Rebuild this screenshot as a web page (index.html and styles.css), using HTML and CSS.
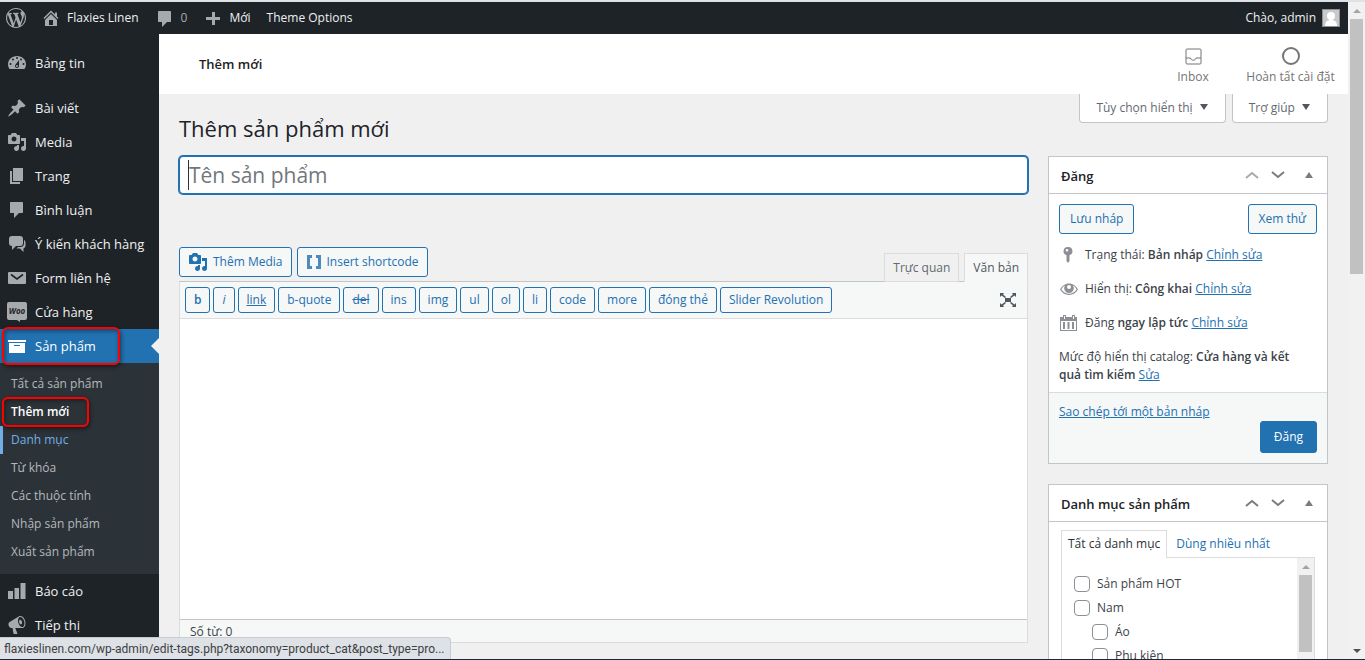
FILE: index.html
```html
<!DOCTYPE html>
<html lang="vi">
<head>
    <meta charset="UTF-8">
    <meta name="viewport" content="width=device-width, initial-scale=1.0">
    <title>Thêm sản phẩm mới</title>
    <link rel="stylesheet" href="styles.css">
</head>
<body>
    <div class="page">
        <header class="adminbar">
            <a href="#" class="bar-item bar-logo" aria-label="WordPress">
                <svg class="icon" viewBox="0 0 20 20"><path d="M20 10c0-5.51-4.49-10-10-10C4.48 0 0 4.49 0 10c0 5.52 4.48 10 10 10 5.51 0 10-4.48 10-10zM7.78 15.37L4.37 6.22c.55-.02 1.17-.08 1.17-.08.5-.06.44-1.13-.06-1.11 0 0-1.45.11-2.37.11-.18 0-.37 0-.58-.01C4.12 2.69 6.87 1.11 10 1.11c2.33 0 4.45.87 6.05 2.34-.68-.11-1.65.39-1.65 1.58 0 .74.45 1.36.9 2.1.35.61.55 1.36.55 2.46 0 1.49-1.4 5-1.4 5l-3.03-8.37c.54-.02.82-.17.82-.17.5-.05.44-1.25-.06-1.22 0 0-1.44.12-2.38.12-.87 0-2.33-.12-2.33-.12-.5-.03-.56 1.2-.06 1.22l.92.08 1.26 3.41zM17.41 10c.24-.64.74-1.87.43-4.25.7 1.29 1.05 2.71 1.05 4.25 0 3.29-1.73 6.24-4.4 7.78.97-2.59 1.94-5.2 2.92-7.78zM6.1 18.09C3.12 16.65 1.11 13.53 1.11 10c0-1.3.23-2.48.72-3.59C3.25 10.3 4.67 14.2 6.1 18.09zm4.03-6.63l2.58 6.98c-.86.29-1.76.45-2.71.45-.79 0-1.57-.11-2.29-.33.81-2.38 1.62-4.74 2.42-7.1z"/></svg>
            </a>
            <a href="#" class="bar-item">
                <svg class="icon" viewBox="0 0 20 20"><path d="M16 8.5l1.53 1.53-1.06 1.06L10 4.6l-6.47 6.49-1.06-1.06L10 2.5l4 4v-2h2v4zm-6-2.46l6 5.99V18H4v-5.97zM12 17v-5H8v5h4z"/></svg>
                Flaxies Linen
            </a>
            <a href="#" class="bar-item bar-count">
                <svg class="icon" viewBox="0 0 20 20"><path d="M4 3h11c.6 0 1 .4 1 1v9c0 .6-.4 1-1 1h-3l-5 5v-5H4c-.6 0-1-.4-1-1V4c0-.6.4-1 1-1z"/></svg>
                0
            </a>
            <a href="#" class="bar-item">
                <svg class="icon" viewBox="0 0 20 20"><path d="M17 9v3h-5v5H9v-5H3V9h6V4h3v5h5z"/></svg>
                Mới
            </a>
            <a href="#" class="bar-item">Theme Options</a>
            <a href="#" class="bar-item bar-user">
                Chào, admin
                <svg class="avatar" viewBox="0 0 18 18"><rect width="18" height="18" fill="#8c8f94"/><rect x="1" y="1" width="16" height="16" fill="#c9c9c9"/><circle cx="9" cy="7" r="4" fill="#fff"/><path d="M3 17c0-4 2-6 6-6s6 2 6 6z" fill="#fff"/></svg>
            </a>
        </header>

        <div class="layout">
            <nav class="menu">
                <a href="#" class="menu-item">
                    <svg class="icon" viewBox="0 0 20 20"><path fill-rule="evenodd" d="M2.500 16h15c1-1.400 1.500-2.900 1.500-4.500C19 6.500 15 3 10 3s-9 3.500-9 8.500c0 1.600.5 3.100 1.500 4.500zM10 4a1 1 0 110 2 1 1 0 010-2zM6 5.500a1 1 0 110 2 1 1 0 010-2zm8 0a1 1 0 110 2 1 1 0 010-2zm-5.370 6.050L12 7v6c0 1.100-.9 2-2 2s-2-.9-2-2c0-.57.24-1.080.63-1.450zM3.500 10a1 1 0 110 2 1 1 0 010-2zm13 0a1 1 0 110 2 1 1 0 010-2zM11 13a1 1 0 10-2 0 1 1 0 002 0z"/></svg>
                    Bảng tin
                </a>
                <a href="#" class="menu-item menu-gap">
                    <svg class="icon" viewBox="0 0 20 20"><path d="M10.44 3.02l1.82-1.82 6.36 6.35-1.83 1.82c-1.05-.68-2.48-.57-3.41.36l-.75.75c-.92.93-1.04 2.35-.35 3.41l-1.83 1.82-2.41-2.41-2.8 2.79c-.42.42-3.38 2.71-3.8 2.29s1.86-3.39 2.28-3.81l2.79-2.79L4.1 9.36l1.83-1.82c1.05.69 2.48.57 3.4-.36l.75-.75c.93-.92 1.05-2.35.36-3.41z"/></svg>
                    Bài viết
                </a>
                <a href="#" class="menu-item">
                    <svg class="icon" viewBox="0 0 20 20"><path d="M13 11V4c0-.55-.45-1-1-1h-1.67L9 1H5L3.67 3H2c-.55 0-1 .45-1 1v7c0 .55.45 1 1 1h10c.55 0 1-.45 1-1zM7 4.5c1.38 0 2.5 1.12 2.5 2.5S8.38 9.5 7 9.5 4.5 8.38 4.5 7 5.62 4.5 7 4.5zM14 6h5v10.5c0 1.38-1.12 2.5-2.5 2.5S14 17.88 14 16.5s1.12-2.5 2.5-2.5c.17 0 .34.02.5.05V9h-3V6zm-4 8.05V13h2v3.5c0 1.38-1.12 2.5-2.5 2.5S7 17.88 7 16.5 8.12 14 9.5 14c.17 0 .34.02.5.05z"/></svg>
                    Media
                </a>
                <a href="#" class="menu-item">
                    <svg class="icon" viewBox="0 0 20 20"><path d="M6 15V2h10v13H6zm-1 1h8v2H3V5h2v11z"/></svg>
                    Trang
                </a>
                <a href="#" class="menu-item">
                    <svg class="icon" viewBox="0 0 20 20"><path d="M4 2h11c.6 0 1 .4 1 1v9c0 .6-.4 1-1 1h-3l-5 5v-5H4c-.6 0-1-.4-1-1V3c0-.6.4-1 1-1z"/></svg>
                    Bình luận
                </a>
                <a href="#" class="menu-item">
                    <svg class="icon" viewBox="0 0 20 20"><path d="M5 2h8c2 0 3 1.200 3 3v4c0 1.800-1 3-3 3H9l-4 4v-4c-2 0-3-1.200-3-3V5c0-1.800 1-3 3-3z"/><path d="M17 6c1 .5 1.500 1.500 1.500 2.500v3c0 1.500-.8 2.500-2 2.700V18L13 14.500H9.500L11 13h2.500c2 0 3.500-1.300 3.500-3.500z"/></svg>
                    Ý kiến khách hàng
                </a>
                <a href="#" class="menu-item">
                    <svg class="icon" viewBox="0 0 20 20"><rect x="1" y="4" width="18" height="12" rx="1"/><path d="M4 6.500l6 4.500 6-4.500" fill="none" stroke="#1d2327" stroke-width="1.600"/></svg>
                    Form liên hệ
                </a>
                <a href="#" class="menu-item">
                    <svg class="icon" viewBox="0 0 20 20"><path d="M2 0h16a2 2 0 012 2v14a2 2 0 01-2 2h-5v2l-3-2H2a2 2 0 01-2-2V2a2 2 0 012-2z"/><text class="woo" x="10" y="12" text-anchor="middle">Woo</text></svg>
                    Cửa hàng
                </a>
                <a href="#" class="menu-item current marked">
                    <svg class="icon" viewBox="0 0 20 20"><path d="M19 4v2H1V4h18zM2 7h16v10H2V7zm11 3V9H7v1h6z"/></svg>
                    Sản phẩm
                </a>
                <div class="submenu">
                    <a href="#">Tất cả sản phẩm</a>
                    <a href="#" class="active marked">Thêm mới</a>
                    <a href="#" class="hovered">Danh mục</a>
                    <a href="#">Từ khóa</a>
                    <a href="#">Các thuộc tính</a>
                    <a href="#">Nhập sản phẩm</a>
                    <a href="#">Xuất sản phẩm</a>
                </div>
                <a href="#" class="menu-item">
                    <svg class="icon" viewBox="0 0 20 20"><path d="M18.500 18V2h-5v16h5zm-6.500 0V7H7.500v11H12zm-6 0v-8H1v8h5z"/></svg>
                    Báo cáo
                </a>
                <a href="#" class="menu-item">
                    <svg class="icon" viewBox="0 0 20 20"><path fill-rule="evenodd" d="M18.15 5.94c.46 1.62.38 3.22-.02 4.48-.42 1.28-1.26 2.18-2.3 2.48-.16.06-.26.06-.4.06-.06.02-.12.02-.18.02-.06.02-.14.02-.22.02h-6.8l2.22 5.5c.02.14-.06.26-.14.34-.08.1-.24.16-.34.16H6.95c-.1 0-.26-.06-.34-.16-.08-.08-.16-.2-.14-.34l-1-5.5H4.25l-.02-.02c-.5.06-1.08-.18-1.54-.62s-.88-1.08-1.06-1.88c-.24-.8-.2-1.56-.02-2.2.18-.62.58-1.08 1.06-1.3l.02-.02 9-5.4c.1-.06.18-.1.24-.16.06-.04.14-.08.24-.12.16-.08.28-.12.5-.18 1.04-.3 2.24.1 3.22.98s1.84 2.24 2.26 3.86zm-2.58 5.98h-.02c.4-.1.74-.34 1.04-.7.58-.7.86-1.76.86-3.04 0-.64-.1-1.3-.28-1.98-.34-1.36-1.02-2.5-1.78-3.24s-1.68-1.1-2.46-.88c-.82.22-1.4.96-1.7 2-.32 1.04-.28 2.36.06 3.72.38 1.36 1 2.5 1.8 3.24.78.74 1.62 1.1 2.48.88zm-2.54-7.08c.22-.04.42-.02.62.04.38.16.76.48 1.02 1s.42 1.2.42 1.78c0 .3-.04.56-.12.8-.18.48-.44.84-.86.94-.34.1-.8-.06-1.14-.4s-.64-.86-.78-1.5c-.18-.62-.12-1.24.02-1.72s.48-.84.82-.94z"/></svg>
                    Tiếp thị
                </a>
            </nav>

            <main class="content">
                <div class="woo-header">
                    <h1 class="woo-title">Thêm mới</h1>
                    <button type="button" class="woo-tab">
                        <svg class="tab-icon tab-icon-thin" viewBox="0 0 20 20"><rect x="3" y="3" width="15" height="15" rx="1"/><path d="M3 12h4.500c.5 3 5 3 5.500 0H18"/></svg>
                        Inbox
                    </button>
                    <button type="button" class="woo-tab">
                        <svg class="tab-icon" viewBox="0 0 20 20"><circle cx="10" cy="10" r="8"/></svg>
                        Hoàn tất cài đặt
                    </button>
                </div>

                <div class="wrap">
                    <div class="screen-links">
                        <button type="button">Tùy chọn hiển thị <span class="tri-down"></span></button>
                        <button type="button">Trợ giúp <span class="tri-down"></span></button>
                    </div>
                    <h2 class="page-title">Thêm sản phẩm mới</h2>

                    <div class="columns">
                        <section class="editor">
                            <input type="text" class="title-input" id="title" aria-label="Tên sản phẩm" placeholder="Tên sản phẩm">

                            <div class="editor-tools">
                                <button type="button" class="button">
                                    <svg class="icon" viewBox="0 0 20 20"><path d="M13 11V4c0-.55-.45-1-1-1h-1.67L9 1H5L3.67 3H2c-.55 0-1 .45-1 1v7c0 .55.45 1 1 1h10c.55 0 1-.45 1-1zM7 4.5c1.38 0 2.5 1.12 2.5 2.5S8.38 9.5 7 9.5 4.5 8.38 4.5 7 5.62 4.5 7 4.5zM14 6h5v10.5c0 1.38-1.12 2.5-2.5 2.5S14 17.88 14 16.5s1.12-2.5 2.5-2.5c.17 0 .34.02.5.05V9h-3V6zm-4 8.05V13h2v3.5c0 1.38-1.12 2.5-2.5 2.5S7 17.88 7 16.5 8.12 14 9.5 14c.17 0 .34.02.5.05z"/></svg>
                                    Thêm Media
                                </button>
                                <button type="button" class="button">
                                    <svg class="icon icon-brackets" viewBox="0 0 16 16"><path d="M1 1h5v3H4v8h2v3H1zM15 1h-5v3h2v8h-2v3h5z"/></svg>
                                    Insert shortcode
                                </button>
                                <div class="editor-tabs">
                                    <button type="button">Trực quan</button>
                                    <button type="button" class="selected">Văn bản</button>
                                </div>
                            </div>

                            <div class="editor-box">
                                <div class="quicktags">
                                    <button type="button" class="button"><b>b</b></button>
                                    <button type="button" class="button"><i>i</i></button>
                                    <button type="button" class="button"><u>link</u></button>
                                    <button type="button" class="button">b-quote</button>
                                    <button type="button" class="button"><del>del</del></button>
                                    <button type="button" class="button">ins</button>
                                    <button type="button" class="button">img</button>
                                    <button type="button" class="button">ul</button>
                                    <button type="button" class="button">ol</button>
                                    <button type="button" class="button">li</button>
                                    <button type="button" class="button">code</button>
                                    <button type="button" class="button">more</button>
                                    <button type="button" class="button">đóng thẻ</button>
                                    <button type="button" class="button">Slider Revolution</button>
                                    <button type="button" class="expand" aria-label="Toàn màn hình">
                                        <svg class="icon" viewBox="0 0 20 20"><path d="M7 8h6v4H7zM2 3h4L5 4.500 8 7 7 8 3.500 5.500 2 7zM18 3h-4l1 1.500L12 7l1 1 3.500-2.500L18 7zM2 17h4l-1-1.500L8 13l-1-1-3.500 2.500L2 13zM18 17h-4l1-1.500-3-2.500 1-1 3.500 2.500L18 13z"/></svg>
                                    </button>
                                </div>
                                <textarea class="editor-text" aria-label="Nội dung"></textarea>
                                <div class="word-count">Số từ: 0</div>
                            </div>
                        </section>

                        <aside class="side">
                            <section class="postbox">
                                <div class="postbox-header">
                                    <h2>Đăng</h2>
                                    <button type="button" class="disabled" aria-label="Lên"><svg viewBox="0 0 14 8"><path d="M1 7l6-5 6 5"/></svg></button>
                                    <button type="button" aria-label="Xuống"><svg viewBox="0 0 14 8"><path d="M1 1l6 5 6-5"/></svg></button>
                                    <button type="button" aria-label="Thu gọn"><span class="tri-up"></span></button>
                                </div>
                                <div class="publish">
                                    <div class="publish-actions">
                                        <button type="button" class="button">Lưu nháp</button>
                                        <button type="button" class="button">Xem thử</button>
                                    </div>
                                    <p class="publish-row">
                                        <svg class="icon" viewBox="0 0 20 20"><path fill-rule="evenodd" d="M9 2a4.200 4.200 0 011.500 8.200V16L9 18l-1.500-2v-5.800A4.200 4.200 0 019 2zM8 4a1.300 1.300 0 100 2.600A1.300 1.300 0 008 4z"/></svg>
                                        <span>Trạng thái: <b>Bản nháp</b> <a href="#">Chỉnh sửa</a></span>
                                    </p>
                                    <p class="publish-row">
                                        <svg class="icon" viewBox="0 0 20 20"><path fill-rule="evenodd" d="M10 4.500c4 0 7 2.500 9 6-2 3-5 5.500-9 5.500s-7-2.500-9-5.500c2-3.500 5-6 9-6zM6 6.500c-1.500.8-2.700 2.200-3.600 4C4 13 7 14.700 10 14.700s6-1.700 7.600-4.200c-.9-1.800-2.100-3.200-3.600-4A4.800 4.800 0 0110 14a4.800 4.800 0 01-4-7.500zM10 6a2 2 0 100 4 2 2 0 000-4z"/></svg>
                                        <span>Hiển thị: <b>Công khai</b> <a href="#">Chỉnh sửa</a></span>
                                    </p>
                                    <p class="publish-row">
                                        <svg class="icon" viewBox="0 0 20 20"><path fill-rule="evenodd" d="M1 4h3V2h3v2h6V2h3v2h2v14H1zM2 8v9h15V8zM5 3v3h1V3zM14 3v3h1V3zM4 9h2v7H4zM8.500 9h2v7h-2zM13 9h2v7h-2z"/></svg>
                                        <span>Đăng <b>ngay lập tức</b> <a href="#">Chỉnh sửa</a></span>
                                    </p>
                                    <p class="catalog">Mức độ hiển thị catalog: <b>Cửa hàng và kết quả tìm kiếm</b> <a href="#">Sửa</a></p>
                                </div>
                                <div class="publish-footer">
                                    <a href="#">Sao chép tới một bản nháp</a>
                                    <button type="submit" class="button primary">Đăng</button>
                                </div>
                            </section>

                            <section class="postbox">
                                <div class="postbox-header">
                                    <h2>Danh mục sản phẩm</h2>
                                    <button type="button" aria-label="Lên"><svg viewBox="0 0 14 8"><path d="M1 7l6-5 6 5"/></svg></button>
                                    <button type="button" aria-label="Xuống"><svg viewBox="0 0 14 8"><path d="M1 1l6 5 6-5"/></svg></button>
                                    <button type="button" aria-label="Thu gọn"><span class="tri-up"></span></button>
                                </div>
                                <div class="categories">
                                    <div class="cat-tabs">
                                        <a href="#" class="selected">Tất cả danh mục</a>
                                        <a href="#">Dùng nhiều nhất</a>
                                    </div>
                                    <div class="cat-panel">
                                        <div class="cat-list">
                                            <label><input type="checkbox"> Sản phẩm HOT</label>
                                            <label><input type="checkbox"> Nam</label>
                                            <label class="child"><input type="checkbox"> Áo</label>
                                            <label class="child"><input type="checkbox"> Phụ kiện</label>
                                        </div>
                                        <div class="scrollbar">
                                            <span class="arrow-up"></span>
                                            <span class="thumb thumb-small"></span>
                                        </div>
                                    </div>
                                </div>
                            </section>
                        </aside>
                    </div>
                </div>
            </main>
        </div>
    </div>

    <div class="scrollbar">
        <span class="arrow-up"></span>
        <span class="thumb"></span>
        <span class="arrow-down"></span>
    </div>

    <div class="status-url">flaxieslinen.com/wp-admin/edit-tags.php?taxonomy=product_cat&amp;post_type=pro...</div>
</body>
</html>
```
FILE: styles.css
```css
*,
*::before,
*::after {
    box-sizing: border-box;
}
body {
    margin: 0;
    height: 100vh;
    overflow: hidden;
    display: flex;
    position: relative;
    border-top: 2px solid #dee1e6;
    border-bottom: 1px solid #1b2a3a;
    background: #f0f0f1;
    color: #3c434a;
    font-family: "Open Sans", "Noto Sans", sans-serif;
    font-size: 12px;
    line-height: 18px;
}
a {
    color: #2271b1;
}
button {
    font-family: inherit;
    font-size: 12px;
    line-height: 18px;
    cursor: pointer;
}
b {
    font-weight: 600;
}
.icon {
    width: 20px;
    height: 20px;
    flex: none;
    fill: currentColor;
}
.page {
    flex: 1;
    min-width: 0;
    display: flex;
    flex-direction: column;
}

/* Admin bar */
.adminbar {
    flex: none;
    height: 32px;
    display: flex;
    background: #1d2327;
}
.bar-item {
    display: flex;
    align-items: center;
    gap: 6px;
    padding: 0 8px;
    color: #f0f0f1;
    text-decoration: none;
}
.bar-item .icon {
    color: #a7aaad;
}
.bar-logo {
    padding: 0 7px 0 6px;
}
.bar-count {
    color: #a7aaad;
}
.bar-user {
    margin-left: auto;
}
.avatar {
    width: 18px;
    height: 18px;
}

/* Left menu */
.layout {
    flex: 1;
    min-height: 0;
    display: flex;
}
.menu {
    flex: none;
    width: 159px;
    padding-top: 12px;
    overflow: hidden;
    background: #1d2327;
}
.menu-item {
    position: relative;
    height: 34px;
    display: flex;
    align-items: center;
    gap: 8px;
    padding-left: 7px;
    color: #f0f0f1;
    font-size: 13px;
    text-decoration: none;
    white-space: nowrap;
}
.menu-item .icon {
    color: #a7aaad;
}
.menu-gap {
    margin-top: 11px;
}
.woo {
    fill: #1d2327;
    font: bold italic 8px "Open Sans", sans-serif;
}
.current,
.menu .current .icon {
    color: #fff;
}
.current {
    background: #2271b1;
}
.current::before {
    content: "";
    position: absolute;
    right: 0;
    top: 9px;
    border: 8px solid transparent;
    border-left: 0;
    border-right-color: #f0f0f1;
}
.marked::after {
    content: "";
    position: absolute;
    left: 2px;
    top: -2px;
    bottom: -2px;
    width: 118px;
    border: 2px solid #f00;
    border-radius: 6px;
    box-shadow: 1px 2px 4px rgba(0, 0, 0, 0.5), inset 1px 2px 4px rgba(0, 0, 0, 0.4);
    z-index: 1;
}
.submenu {
    padding: 7px 0 8px;
    background: #2c3338;
}
.submenu a {
    position: relative;
    display: block;
    padding: 5px 11px;
    color: #b4b9be;
    text-decoration: none;
}
.submenu .active {
    color: #fff;
    font-weight: 600;
}
.submenu .marked::after {
    top: -1px;
    bottom: -1px;
    width: 87px;
}
.submenu .hovered {
    padding-left: 8px;
    border-left: 3px solid #72aee6;
    color: #72aee6;
}

/* Header */
.content {
    flex: 1;
    min-width: 0;
    overflow: hidden;
}
.woo-header {
    height: 60px;
    display: flex;
    align-items: center;
    padding-left: 40px;
    background: #fff;
}
.woo-title {
    margin: 0 auto 0 0;
    color: #1e1e1e;
    font-size: 13px;
    font-weight: 600;
}
.woo-tab {
    min-width: 80px;
    height: 60px;
    display: flex;
    flex-direction: column;
    align-items: center;
    justify-content: center;
    gap: 2px;
    padding: 4px 12px 0;
    border: 0;
    background: none;
    color: #757575;
}
.woo-tab:last-child {
    min-width: 115px;
}
.tab-icon {
    width: 20px;
    height: 20px;
    fill: none;
    stroke: #757575;
    stroke-width: 2;
}
.tab-icon-thin {
    stroke-width: 1;
}
.wrap {
    padding: 0 20px;
}
.screen-links {
    height: 19px;
    display: flex;
    align-items: flex-start;
    justify-content: flex-end;
    gap: 6px;
}
.screen-links button {
    height: 29px;
    padding: 0 17px 0 16px;
    border: 1px solid #c3c4c7;
    border-top: 0;
    border-radius: 0 0 4px 4px;
    background: #fff;
    color: #646970;
}
.tri-down,
.tri-up {
    display: inline-block;
    border: 4px solid transparent;
}
.tri-down {
    margin-left: 4px;
    border-top: 6px solid #50575e;
    border-bottom: 0;
    vertical-align: 2px;
}
.tri-up {
    border-bottom: 6px solid #787c82;
    border-top: 0;
}
.page-title {
    margin: 0;
    padding-bottom: 13px;
    color: #1d2327;
    font-size: 22px;
    font-weight: 400;
    line-height: 30px;
}

/* Editor */
.columns {
    display: flex;
    align-items: flex-start;
    gap: 20px;
}
.editor {
    flex: 1;
    min-width: 0;
}
.title-input {
    display: block;
    width: 100%;
    height: 38px;
    padding: 0 9px;
    border: 1px solid #2271b1;
    border-radius: 4px;
    outline: 0;
    box-shadow: 0 0 0 1px #2271b1;
    background: linear-gradient(#2c3338, #2c3338) 8px center / 1px 30px no-repeat #fff;
    color: #2c3338;
    font-family: inherit;
    font-size: 21px;
}
.title-input::placeholder {
    color: #72777c;
}
.button {
    height: 30px;
    display: flex;
    align-items: center;
    gap: 5px;
    padding: 0 10px;
    border: 1px solid #2271b1;
    border-radius: 3px;
    background: #f6f7f7;
    color: #2271b1;
    white-space: nowrap;
}
.editor-tools {
    display: flex;
    gap: 5px;
    margin-top: 53px;
}
.editor-tools .button {
    padding: 0 8px;
}
.icon-brackets {
    width: 16px;
    height: 16px;
    opacity: 0.8;
}
.editor-tabs {
    display: flex;
    align-items: flex-end;
    gap: 5px;
    height: 35px;
    margin-left: auto;
    margin-bottom: -1px;
    z-index: 1;
}
.editor-tabs button {
    height: 29px;
    padding: 0 8px;
    border: 1px solid #dcdcde;
    background: #f0f0f1;
    color: #646970;
}
.editor-tabs .selected {
    border-bottom-color: #f6f7f7;
    background: #f6f7f7;
    color: #50575e;
}
.editor-box {
    border: 1px solid #dcdcde;
    border-top-color: #c3c4c7;
    background: #f6f7f7;
}
.quicktags {
    display: flex;
    align-items: center;
    gap: 3px;
    padding: 5px;
    border-bottom: 1px solid #dcdcde;
}
.quicktags .button {
    height: 26px;
    padding: 0 8px;
}
.expand {
    display: flex;
    margin-left: auto;
    margin-right: 4px;
    padding: 0;
    border: 0;
    background: none;
    color: #50575e;
}
.editor-text {
    display: block;
    width: 100%;
    height: 300px;
    padding: 10px;
    border: 0;
    outline: 0;
    resize: none;
    background: #fff;
}
.word-count {
    padding: 3px 10px 1px;
    border-top: 1px solid #c3c4c7;
}

/* Side boxes */
.side {
    flex: none;
    width: 280px;
}
.postbox {
    margin-bottom: 20px;
    border: 1px solid #c3c4c7;
    background: #fff;
}
.postbox-header {
    height: 37px;
    display: flex;
    align-items: center;
    padding: 0 5px 0 12px;
    border-bottom: 1px solid #c3c4c7;
}
.postbox-header h2 {
    margin: 0 auto 0 0;
    padding-top: 2px;
    color: #1d2327;
    font-size: 13px;
    font-weight: 600;
}
.postbox-header button {
    width: 26px;
    height: 36px;
    display: flex;
    align-items: center;
    justify-content: center;
    padding: 0;
    border: 0;
    background: none;
}
.postbox-header button:last-child {
    margin-left: 5px;
}
.postbox-header svg {
    width: 14px;
    height: 8px;
    fill: none;
    stroke: #787c82;
    stroke-width: 2;
}
.postbox-header .disabled svg {
    stroke: #a7aaad;
}
.publish {
    padding: 10px 10px 8px;
}
.publish-actions {
    display: flex;
    justify-content: space-between;
    margin-bottom: 4px;
}
.publish-row {
    height: 34px;
    display: flex;
    align-items: center;
    gap: 6px;
    margin: 0;
    white-space: nowrap;
}
.publish-row .icon {
    color: #8c8f94;
}
.catalog {
    margin: 8px 0 0;
    padding-right: 16px;
}
.publish-footer {
    display: flex;
    flex-direction: column;
    align-items: flex-start;
    padding: 10px;
    border-top: 1px solid #dcdcde;
    background: #f6f7f7;
}
.primary {
    align-self: flex-end;
    height: 32px;
    padding: 0 13px;
    background: #2271b1;
    color: #fff;
}
.categories {
    padding: 8px 12px 0;
}
.cat-tabs {
    display: flex;
}
.cat-tabs a {
    height: 27px;
    padding: 5px 9px;
    text-decoration: none;
    white-space: nowrap;
}
.cat-tabs .selected {
    height: 28px;
    margin-bottom: -1px;
    padding: 4px 6px;
    border: 1px solid #dcdcde;
    border-bottom: 0;
    background: #fff;
    color: #2c3338;
    z-index: 1;
}
.cat-panel {
    height: 200px;
    display: flex;
    border: 1px solid #dcdcde;
}
.cat-list {
    flex: 1;
    padding: 14px 12px;
}
.cat-list label {
    height: 24px;
    display: flex;
    align-items: center;
    gap: 7px;
}
.cat-list .child {
    margin-left: 18px;
}
.cat-list input {
    appearance: none;
    width: 16px;
    height: 16px;
    margin: 0;
    border: 1px solid #8c8f94;
    border-radius: 4px;
    background: #fff;
}

/* Scrollbars */
.scrollbar {
    flex: none;
    width: 17px;
    display: flex;
    flex-direction: column;
    align-items: center;
    background: #f1f1f1;
}
.arrow-up,
.arrow-down {
    border: 4px solid transparent;
}
.arrow-up {
    margin: 7px 0 6px;
    border-top: 0;
    border-bottom-color: #a3a3a3;
}
.arrow-down {
    margin: auto 0 6px;
    border-bottom: 0;
    border-top-color: #505050;
}
.thumb {
    width: 13px;
    height: 255px;
    background: #c1c1c1;
}
.thumb-small {
    height: 77px;
}

/* Link preview */
.status-url {
    position: absolute;
    left: 0;
    bottom: 0;
    height: 22px;
    padding: 2px 5px 0 4px;
    border: 1px solid #c8cbd0;
    border-left: 0;
    border-bottom: 0;
    border-radius: 0 4px 0 0;
    background: #dee1e6;
    color: #3c4043;
    font-family: Roboto, "Open Sans", sans-serif;
    z-index: 2;
}
```
